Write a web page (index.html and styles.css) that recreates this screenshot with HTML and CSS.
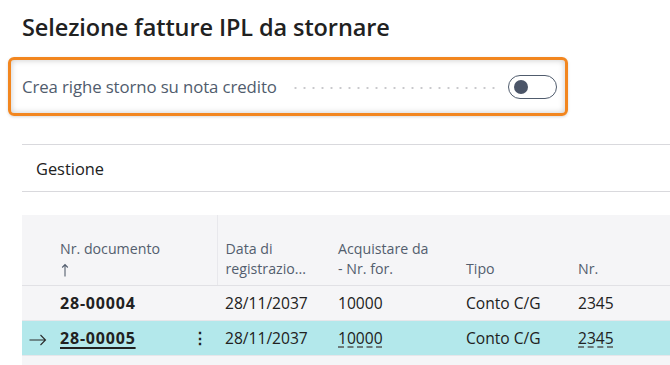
FILE: index.html
```html
<!DOCTYPE html>
<html lang="it">
<head>
    <meta charset="UTF-8">
    <title>Selezione fatture IPL da stornare</title>
    <link rel="stylesheet" href="styles.css">
</head>
<body>
    <div class="page">
        <h1 class="page-title">Selezione fatture IPL da stornare</h1>

        <div class="field-box">
            <span class="field-label">Crea righe storno su nota credito</span>
            <span class="field-leader"></span>
            <span class="toggle"><span class="toggle-knob"></span></span>
        </div>

        <div class="action-bar">
            <span class="action-item">Gestione</span>
        </div>

        <table class="lines">
            <colgroup>
                <col class="col-ind">
                <col class="col-doc">
                <col class="col-menu">
                <col class="col-date">
                <col class="col-vend">
                <col class="col-type">
                <col class="col-no">
            </colgroup>
            <thead>
                <tr>
                    <th></th>
                    <th>Nr. documento<br>
                        <svg class="sort" width="8" height="14" viewBox="0 0 8 14"><path d="M4 13.5V1.5M1.2 4.5L4 1.5L6.8 4.5" fill="none" stroke="#535e6e" stroke-width="1.1"/></svg>
                    </th>
                    <th class="sep"></th>
                    <th>Data di<br>registrazio...</th>
                    <th>Acquistare da<br>- Nr. for.</th>
                    <th>Tipo</th>
                    <th>Nr.</th>
                </tr>
            </thead>
            <tbody>
                <tr>
                    <td></td>
                    <td class="doc">28-00004</td>
                    <td class="sep"></td>
                    <td>28/11/2037</td>
                    <td>10000</td>
                    <td>Conto C/G</td>
                    <td>2345</td>
                </tr>
                <tr class="selected">
                    <td class="ind">
                        <svg width="18" height="12" viewBox="0 0 18 12"><path d="M0.5 6H16.5M11.5 1L16.5 6L11.5 11" fill="none" stroke="#2b2b2b" stroke-width="1.1"/></svg>
                    </td>
                    <td class="doc"><span class="link">28-00005</span></td>
                    <td class="sep menu">⋮</td>
                    <td>28/11/2037</td>
                    <td><span class="lookup">10000</span></td>
                    <td>Conto C/G</td>
                    <td><span class="lookup">2345</span></td>
                </tr>
                <tr class="filler">
                    <td colspan="7"></td>
                </tr>
            </tbody>
        </table>
    </div>
</body>
</html>
```

FILE: styles.css
```css
* {
    margin: 0;
    padding: 0;
    box-sizing: border-box;
}

body {
    font-family: 'Open Sans', 'Noto Sans', sans-serif;
    background: #ffffff;
    color: #212121;
    overflow: hidden;
}

.page {
    padding: 11px 0 0 22px;
}

.page-title {
    font-size: 23.5px;
    font-weight: 600;
    line-height: 32px;
    color: #212121;
    letter-spacing: -0.1px;
}

.field-box {
    display: flex;
    align-items: center;
    width: 560px;
    height: 59px;
    margin: 14px 0 0 -14px;
    padding: 0 8px 0 11px;
    border: 3px solid #f2861f;
    border-radius: 6px;
    box-shadow: inset 0 0 6px rgba(0, 0, 0, 0.22), 0 1px 3px rgba(0, 0, 0, 0.15);
}

.field-label {
    font-size: 16.8px;
    color: #505c6d;
    white-space: nowrap;
    letter-spacing: -0.1px;
}

.field-leader {
    flex: 1;
    height: 4px;
    margin: 2px 12px 0 14px;
    background-image: radial-gradient(circle, #c9c9cc 0.9px, transparent 1.3px);
    background-size: 9px 4px;
    background-repeat: repeat-x;
}

.toggle {
    display: flex;
    align-items: center;
    flex-shrink: 0;
    width: 49px;
    height: 24px;
    padding-left: 5px;
    border: 1px solid #505c6d;
    border-radius: 12px;
}

.toggle-knob {
    width: 14px;
    height: 14px;
    border-radius: 50%;
    background: #4b5568;
}

.action-bar {
    display: flex;
    align-items: center;
    height: 48px;
    margin-top: 28px;
    padding-left: 14px;
    border-top: 1px solid #d9d9dd;
    border-bottom: 1px solid #d9d9dd;
}

.action-item {
    font-size: 16.4px;
    color: #212121;
}

.lines {
    width: 648px;
    margin-top: 23px;
    border-collapse: collapse;
    table-layout: fixed;
    background: #f5f5f7;
}

.col-ind { width: 30px; }
.col-doc { width: 130px; }
.col-menu { width: 35px; }
.col-date { width: 113px; }
.col-vend { width: 128px; }
.col-type { width: 112px; }

.lines th {
    height: 70px;
    padding: 0 8px 6px;
    vertical-align: bottom;
    text-align: left;
    font-size: 14.2px;
    font-weight: 400;
    line-height: 20px;
    color: #535e6e;
    white-space: nowrap;
    border-bottom: 1px solid #e1e1e5;
}

.lines th.sep {
    border-right: 1px solid #e8e8ec;
}

.sort {
    display: inline-block;
    margin: 4px 0 0 1px;
    vertical-align: top;
}

.lines td {
    height: 35px;
    padding: 0 8px;
    font-size: 15.6px;
    color: #212121;
    white-space: nowrap;
    border-bottom: 1px solid #e6e6ea;
}

.lines td.sep {
    padding: 0;
    text-align: center;
}

.lines .doc {
    font-size: 16px;
    font-weight: 700;
    letter-spacing: 0.8px;
}

.lines .ind {
    padding: 4px 0 0 7px;
}

.selected td {
    background: #b3e8eb;
}

.link {
    text-decoration: underline;
    text-decoration-thickness: 1.5px;
    text-underline-offset: 3px;
}

.lookup {
    text-decoration: underline dashed;
    text-underline-offset: 3px;
    text-decoration-color: #555;
}

.menu {
    font-size: 18px;
    font-weight: 700;
    color: #333;
}

.filler td {
    height: 12px;
    border-bottom: none;
}
```
